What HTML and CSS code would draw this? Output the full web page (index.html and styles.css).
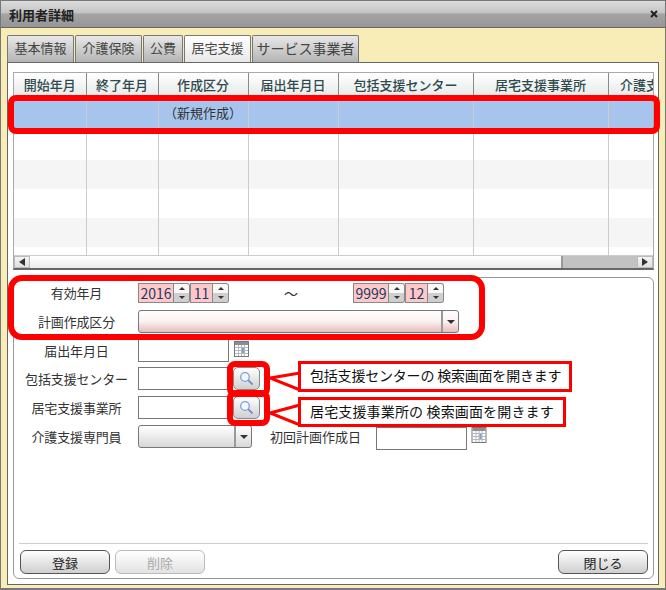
FILE: index.html
```html
<!DOCTYPE html>
<html lang="ja">
<head>
    <meta charset="UTF-8">
    <title>利用者詳細</title>
    <link rel="stylesheet" href="styles.css">
</head>
<body>
    <div class="window">
        <div class="titlebar">
            <span>利用者詳細</span>
            <svg class="close-icon" width="8" height="8" viewBox="0 0 8 8"><path d="M1 1 L7 7 M7 1 L1 7" stroke="#222" stroke-width="2"/></svg>
        </div>
        <div class="window-body">
            <div class="tabs">
                <div class="tab tab-a">基本情報</div>
                <div class="tab tab-a">介護保険</div>
                <div class="tab tab-b">公費</div>
                <div class="tab tab-a active">居宅支援</div>
                <div class="tab tab-c">サービス事業者</div>
            </div>
            <div class="panel">
                <!-- 履歴一覧 -->
                <div class="grid-box">
                    <div class="grid-scroll">
                        <table class="grid">
                            <colgroup>
                                <col class="c1"><col class="c2"><col class="c3"><col class="c3"><col class="c4"><col class="c4"><col class="c5">
                            </colgroup>
                            <thead>
                                <tr><th>開始年月</th><th>終了年月</th><th>作成区分</th><th>届出年月日</th><th>包括支援センター</th><th>居宅支援事業所</th><th>介護支援専門員</th></tr>
                            </thead>
                            <tbody>
                                <tr class="selected"><td></td><td></td><td>（新規作成）</td><td></td><td></td><td></td><td></td></tr>
                                <tr><td></td><td></td><td></td><td></td><td></td><td></td><td></td></tr>
                                <tr class="stripe"><td></td><td></td><td></td><td></td><td></td><td></td><td></td></tr>
                                <tr><td></td><td></td><td></td><td></td><td></td><td></td><td></td></tr>
                                <tr class="stripe"><td></td><td></td><td></td><td></td><td></td><td></td><td></td></tr>
                                <tr class="last"><td></td><td></td><td></td><td></td><td></td><td></td><td></td></tr>
                            </tbody>
                        </table>
                    </div>
                    <div class="hscroll">
                        <div class="hscroll-btn"><svg width="8" height="8" viewBox="0 0 8 8"><path d="M1 4 L7 0 V8 Z" fill="#333"/></svg></div>
                        <div class="hscroll-track"></div>
                        <div class="hscroll-thumb"></div>
                        <div class="hscroll-btn"><svg width="8" height="8" viewBox="0 0 8 8"><path d="M7 4 L1 0 V8 Z" fill="#333"/></svg></div>
                    </div>
                </div>

                <!-- 入力フォーム -->
                <div class="form-box">
                    <div class="form-rows">
                        <div class="row">
                            <label class="label label-top">有効年月</label>
                            <div class="num num-year">2016</div>
                            <div class="spin"><span class="up"></span><span class="down"></span></div>
                            <div class="num num-month">11</div>
                            <div class="spin"><span class="up"></span><span class="down"></span></div>
                            <div class="tilde">～</div>
                            <div class="num num-year">9999</div>
                            <div class="spin"><span class="up"></span><span class="down"></span></div>
                            <div class="num num-month">12</div>
                            <div class="spin"><span class="up"></span><span class="down"></span></div>
                        </div>
                        <div class="row">
                            <label class="label">計画作成区分</label>
                            <div class="select select-wide"><span class="select-arrow"></span></div>
                        </div>
                        <div class="row">
                            <label class="label">届出年月日</label>
                            <div class="input"></div>
                            <svg class="cal" width="15" height="16" viewBox="0 0 15 16"><rect x="0.5" y="0.5" width="14" height="15" fill="#fff" stroke="#777"/><rect x="1" y="1" width="13" height="3" fill="#8a8f96"/><path d="M1 6.5H14 M1 9.5H14 M1 12.5H14 M4.5 4V15 M7.5 4V15 M10.5 4V15" stroke="#b5b8bc"/><rect x="8" y="7" width="2" height="5" fill="#7f9fd0"/></svg>
                        </div>
                        <div class="row">
                            <label class="label">包括支援センター</label>
                            <div class="input"></div>
                            <div class="search-btn"><svg width="15" height="15" viewBox="0 0 15 15"><circle cx="6" cy="6" r="4.3" fill="#f4f8ff" stroke="#7d9fdc" stroke-width="1.3"/><path d="M9.2 9.2 L13.5 13.5" stroke="#6f8fc8" stroke-width="1.8"/></svg></div>
                        </div>
                        <div class="row">
                            <label class="label">居宅支援事業所</label>
                            <div class="input"></div>
                            <div class="search-btn"><svg width="15" height="15" viewBox="0 0 15 15"><circle cx="6" cy="6" r="4.3" fill="#f4f8ff" stroke="#7d9fdc" stroke-width="1.3"/><path d="M9.2 9.2 L13.5 13.5" stroke="#6f8fc8" stroke-width="1.8"/></svg></div>
                        </div>
                        <div class="row">
                            <label class="label">介護支援専門員</label>
                            <div class="select select-short"><span class="select-arrow"></span></div>
                            <label class="label-first">初回計画作成日</label>
                            <div class="input input-first"></div>
                            <svg class="cal cal-first" width="16" height="16" viewBox="0 0 15 16"><rect x="0.5" y="0.5" width="14" height="15" fill="#fff" stroke="#777"/><rect x="1" y="1" width="13" height="3" fill="#8a8f96"/><path d="M1 6.5H14 M1 9.5H14 M1 12.5H14 M4.5 4V15 M7.5 4V15 M10.5 4V15" stroke="#b5b8bc"/><rect x="8" y="7" width="2" height="5" fill="#7f9fd0"/></svg>
                        </div>
                    </div>
                    <div class="footer">
                        <button class="btn">登録</button>
                        <button class="btn disabled">削除</button>
                        <button class="btn btn-close">閉じる</button>
                    </div>
                </div>
            </div>
        </div>

        <!-- 説明用の赤枠 -->
        <div class="mark mark-row"></div>
        <div class="mark mark-form"></div>
        <div class="mark mark-search1"></div>
        <div class="mark mark-search2"></div>
        <svg class="tails" width="40" height="70" viewBox="0 0 40 70">
            <path d="M2 19 L32 14 V31 Z" fill="#fff" stroke="#f00" stroke-width="3"/>
            <path d="M2 54 L32 46 V66 Z" fill="#fff" stroke="#f00" stroke-width="3"/>
        </svg>
        <div class="callout callout-1">包括支援センターの 検索画面を開きます</div>
        <div class="callout callout-2">居宅支援事業所の 検索画面を開きます</div>
    </div>
</body>
</html>
```

FILE: styles.css
```css
* {
    box-sizing: border-box;
}
body {
    margin: 0;
    font-family: "Noto Sans CJK JP", "Liberation Sans", sans-serif;
    font-size: 13px;
    color: #222;
    background: #fff;
}
.window {
    position: relative;
    width: 666px;
    height: 590px;
    overflow: hidden;
    display: flex;
    flex-direction: column;
    background: #f8edb6;
    border: 1px solid #777;
    border-bottom-width: 2px;
}
.titlebar {
    height: 27px;
    flex: none;
    display: flex;
    align-items: center;
    justify-content: space-between;
    padding: 0 6px 0 8px;
    font-size: 13px;
    font-weight: bold;
    color: #222;
    background: linear-gradient(#dcdcdc 0, #c4c4c4 45%, #a4a4a4 50%, #969696 100%);
    border-bottom: 1px solid #666;
}
.close-icon {
    margin-right: 1px;
}
.window-body {
    flex: 1;
    display: flex;
    flex-direction: column;
    padding: 7px 6px 3px 6px;
    min-height: 0;
}

/* tabs */
.tabs {
    display: flex;
    gap: 1px;
    height: 27px;
    flex: none;
}
.tab {
    height: 27px;
    border: 1px solid #777;
    border-bottom: none;
    border-radius: 2px 2px 0 0;
    text-align: center;
    line-height: 24px;
    color: #444;
    background: linear-gradient(#e8e8e8, #b4b4b4);
}
.tab-a {
    width: 67px;
}
.tab-b {
    width: 40px;
}
.tab-c {
    width: 107px;
    font-size: 14px;
}
.tab.active {
    height: 27px;
    background: linear-gradient(#fff, #e8e8e8);
    color: #444;
}

.panel {
    flex: 1;
    display: flex;
    flex-direction: column;
    gap: 7px;
    padding: 9px 4px 5px 5px;
    background: #fff;
    border: 1px solid #666;
    min-height: 0;
}

/* grid */
.grid-box {
    height: 198px;
    flex: none;
    display: flex;
    flex-direction: column;
    border: 1px solid #aaa;
    border-bottom: 2px solid #666;
}
.grid-scroll {
    flex: 1;
    overflow: hidden;
    min-height: 0;
}
.grid {
    border-collapse: collapse;
    table-layout: fixed;
    width: 709px;
}
.c1 {
    width: 72px;
}
.c2 {
    width: 72px;
}
.c3 {
    width: 90px;
}
.c4 {
    width: 135px;
}
.c5 {
    width: 115px;
}
.grid th {
    height: 26px;
    padding: 0 0 3px;
    font-size: 13px;
    font-weight: 500;
    color: #2f4a4c;
    background: linear-gradient(#fff, #e4e6e6);
    border-right: 1px solid #8a8a8a;
    white-space: nowrap;
    overflow: hidden;
}
.grid td {
    height: 29px;
    padding: 0;
    text-align: center;
    border-right: 1px solid #ccc;
    color: #333;
    font-size: 13px;
}
.grid .selected td {
    height: 32px;
    padding-bottom: 5px;
    background: #a6c4ec;
}
.grid .stripe td {
    background: #f5f5f5;
}
.grid .last td {
    height: 8px;
}
.hscroll {
    height: 13px;
    flex: none;
    display: flex;
    background: linear-gradient(#fff, #ececec);
    border-top: 1px solid #ccc;
}
.hscroll-btn {
    width: 16px;
    display: flex;
    align-items: center;
    justify-content: center;
    background: linear-gradient(#f4f4f4, #e0e0e0);
    border: 1px solid #bbb;
}
.hscroll-track {
    flex: 1;
}
.hscroll-thumb {
    width: 76px;
    background: #c2c2c2;
    border-left: 2px solid #999;
}

/* form */
.form-box {
    flex: 1;
    display: flex;
    flex-direction: column;
    justify-content: space-between;
    padding: 5px 5px 4px;
    border: 1px solid #999;
    border-radius: 6px;
    min-height: 0;
}
.form-rows {
    display: grid;
    grid-template-rows: 27px 29px 28px 29px 29px 29px;
}
.row {
    display: flex;
    align-items: flex-start;
}
.label {
    width: 123px;
    line-height: 23px;
    text-align: center;
    color: #333;
    font-size: 13px;
    white-space: nowrap;
    margin-left: -4px;
    letter-spacing: -0.15px;
}
.label-top {
    line-height: 20px;
}
.num {
    height: 20px;
    line-height: 18px;
    border: 1px solid #888;
    background: #ffc8c8;
    color: #1c3a66;
    font-size: 14px;
    text-align: center;
    white-space: nowrap;
}
.num-year {
    width: 36px;
}
.num-month {
    width: 23px;
}
.spin {
    width: 16px;
    height: 20px;
    display: flex;
    flex-direction: column;
    border: 1px solid #888;
    border-left: none;
    border-radius: 0 3px 3px 0;
    background: linear-gradient(#f8f8f8 50%, #cfcfcf 50%);
}
.spin span {
    flex: 1;
    display: flex;
    align-items: center;
    justify-content: center;
}
.up::before {
    content: "";
    border: 3px solid transparent;
    border-top: none;
    border-bottom: 3px solid #333;
}
.down::before {
    content: "";
    border: 3px solid transparent;
    border-bottom: none;
    border-top: 3px solid #333;
}
.tilde {
    width: 124px;
    line-height: 20px;
    text-align: center;
    color: #333;
    font-size: 14px;
}
.select {
    position: relative;
    height: 23px;
    border: 1px solid #777;
    border-radius: 3px;
}
.select-wide {
    width: 321px;
    background: linear-gradient(#fff, #fdf0f0 50%, #e8bcbc);
}
.select-short {
    width: 114px;
    background: linear-gradient(#fff, #d8d8d8);
}
.select-arrow {
    position: absolute;
    top: 0;
    right: 0;
    bottom: 0;
    width: 17px;
    display: flex;
    align-items: center;
    justify-content: center;
    border-left: 2px solid #999;
}
.select-arrow::before {
    content: "";
    border: 4px solid transparent;
    border-bottom: none;
    border-top: 4px solid #333;
}
.input {
    width: 91px;
    height: 23px;
    border: 1px solid #777;
    background: #fff;
}
.cal {
    margin: 2px 0 0 5px;
}
.search-btn {
    width: 27px;
    height: 23px;
    margin-left: 4px;
    display: flex;
    align-items: center;
    justify-content: center;
    border: 1px solid #888;
    border-radius: 5px;
    background: linear-gradient(#fff, #cfcfcf);
}
.label-first {
    margin-left: 18px;
    width: 106px;
    line-height: 23px;
    color: #333;
    white-space: nowrap;
}
.input-first {
    margin-top: 2px;
}
.cal-first {
    margin: 2px 0 0 4px;
}
.footer {
    display: flex;
    gap: 5px;
    padding: 6px 0 0 1px;
    border-top: 1px solid #ccc;
}
.btn {
    width: 90px;
    height: 24px;
    padding: 0;
    font-family: inherit;
    font-size: 13px;
    color: #222;
    border: 1px solid #555;
    border-radius: 6px;
    background: linear-gradient(#fff, #cecece);
}
.btn.disabled {
    color: #aaa;
    border-color: #bbb;
    background: linear-gradient(#fff, #e2e2e2);
}
.btn-close {
    margin-left: auto;
}

/* red annotations */
.mark {
    position: absolute;
    border: 6px solid #f00;
    border-radius: 8px;
}
.mark-row {
    left: 7px;
    top: 94px;
    width: 652px;
    height: 39px;
}
.mark-form {
    left: 7px;
    top: 274px;
    width: 477px;
    height: 65px;
    border-radius: 14px;
}
.mark-search1 {
    left: 226px;
    top: 360px;
    width: 43px;
    height: 36px;
}
.mark-search2 {
    left: 226px;
    top: 389px;
    width: 43px;
    height: 36px;
}
.tails {
    position: absolute;
    left: 267px;
    top: 358px;
}
.callout {
    position: absolute;
    left: 297px;
    height: 31px;
    padding-left: 9px;
    line-height: 23px;
    font-size: 14px;
    color: #111;
    background: #fff;
    border: 3px solid #f00;
    white-space: nowrap;
}
.callout-1 {
    top: 360px;
    width: 274px;
    letter-spacing: -0.2px;
}
.callout-2 {
    top: 396px;
    width: 268px;
    height: 30px;
    letter-spacing: 0.15px;
}
```
